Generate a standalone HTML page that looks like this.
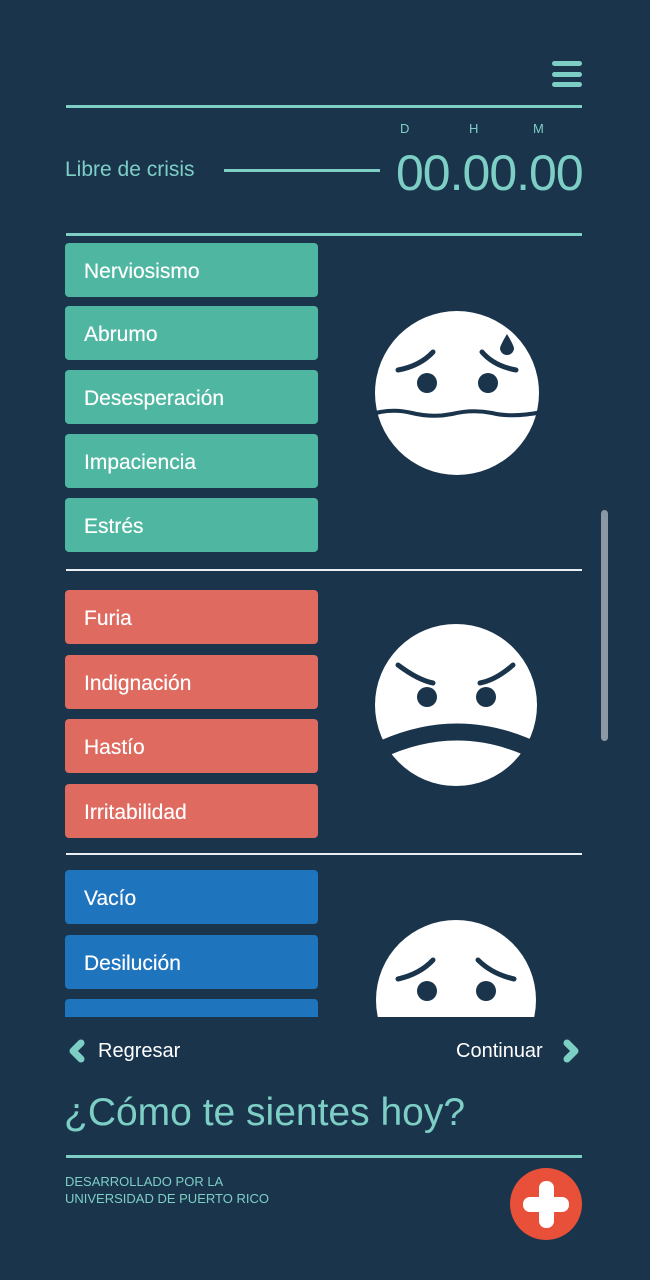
<!DOCTYPE html>
<html><head><meta charset="utf-8"><style>
*{margin:0;padding:0;box-sizing:border-box}
body{width:650px;height:1280px;background:#1a344c;position:relative;overflow:hidden;font-family:"Liberation Sans",sans-serif}
.a{position:absolute}
.hl{position:absolute;height:3px;background:#7dcfc6}
.btn{position:absolute;left:65px;width:253px;height:54px;border-radius:4px;color:#fff;font-size:21px;line-height:58px;padding-left:19px;text-shadow:0 0 0.4px #fff}
.g{background:#4fb7a1}.r{background:#df6a60}.b{background:#1f74be}
.t{color:#7dcfc6}
</style></head><body>
<div class="a" style="left:552px;top:61px;width:30px;height:5px;border-radius:3px;background:#7dcfc6"></div>
<div class="a" style="left:552px;top:72px;width:30px;height:5px;border-radius:3px;background:#7dcfc6"></div>
<div class="a" style="left:552px;top:82px;width:30px;height:5px;border-radius:3px;background:#7dcfc6"></div>
<div class="hl" style="left:66px;top:105px;width:516px"></div>
<div class="a t" style="left:400px;top:121px;font-size:13px">D</div>
<div class="a t" style="left:469px;top:121px;font-size:13px">H</div>
<div class="a t" style="left:533px;top:121px;font-size:13px">M</div>
<div class="a t" style="left:65px;top:158px;font-size:21px">Libre de crisis</div>
<div class="hl" style="left:224px;top:169px;width:156px"></div>
<div class="a t" style="left:396px;top:144px;font-size:50px;letter-spacing:-1px">00.00.00</div>
<div class="hl" style="left:66px;top:233px;width:516px"></div>

<div style="position:absolute;left:0;top:236px;width:650px;height:781px;overflow:hidden">
<div style="position:absolute;left:0;top:-236px;width:650px;height:1280px">
<div class="btn g" style="top:243px">Nerviosismo</div>
<div class="btn g" style="top:306px">Abrumo</div>
<div class="btn g" style="top:370px">Desesperación</div>
<div class="btn g" style="top:434px">Impaciencia</div>
<div class="btn g" style="top:498px">Estrés</div>
<div class="a" style="left:66px;top:569px;width:516px;height:2px;background:#e8eef2"></div>
<div class="btn r" style="top:590px">Furia</div>
<div class="btn r" style="top:655px">Indignación</div>
<div class="btn r" style="top:719px">Hastío</div>
<div class="btn r" style="top:784px">Irritabilidad</div>
<div class="a" style="left:66px;top:853px;width:516px;height:2px;background:#e8eef2"></div>
<div class="btn b" style="top:870px">Vacío</div>
<div class="btn b" style="top:935px">Desilución</div>
<div class="btn b" style="top:999px">x</div>
<svg class="a" style="left:0;top:0" width="650" height="1280">
<g fill="#fff"><circle cx="457" cy="393" r="82"/><circle cx="456" cy="705" r="81"/><circle cx="456" cy="1000" r="80"/></g>
<g fill="none" stroke="#1a344c" stroke-width="5" stroke-linecap="round">
<path d="M398 370 Q420 366 433 352"/><path d="M482 352 Q494 366 516 370"/>
<path d="M372 414 Q392 408 412 413 Q432 418 452 414 Q472 409 492 413 Q512 418 542 412" stroke-width="4"/>
<path d="M398 665 Q418 680 433 683"/><path d="M480 683 Q496 680 513 665"/>
<path d="M398 979 Q420 974 433 960"/><path d="M478 960 Q492 974 514 979"/>
</g>
<path d="M372 754 Q457 710 542 754" fill="none" stroke="#1a344c" stroke-width="17"/>
<g fill="#1a344c"><circle cx="427" cy="383" r="10"/><circle cx="488" cy="383" r="10"/>
<circle cx="427" cy="697" r="10"/><circle cx="486" cy="697" r="10"/>
<circle cx="427" cy="991" r="10"/><circle cx="486" cy="991" r="10"/>
<path d="M507 334 Q501 344 500 348 A7 7 0 0 0 514 348 Q513 344 507 334Z"/></g>
</svg>
</div></div>
<div class="a" style="left:601px;top:510px;width:7px;height:231px;border-radius:4px;background:#8c98a4"></div>

<svg class="a" style="left:66px;top:1038px" width="22" height="26"><path d="M15 5 L7 13 L15 21" fill="none" stroke="#7dcfc6" stroke-width="7" stroke-linecap="round" stroke-linejoin="round"/></svg>
<div class="a" style="left:98px;top:1040px;font-size:20px;color:#fff">Regresar</div>
<div class="a" style="left:456px;top:1040px;font-size:20px;color:#fff">Continuar</div>
<svg class="a" style="left:560px;top:1038px" width="22" height="26"><path d="M7 5 L15 13 L7 21" fill="none" stroke="#7dcfc6" stroke-width="7" stroke-linecap="round" stroke-linejoin="round"/></svg>
<div class="a t" style="left:64px;top:1091px;font-size:39px">¿Cómo te sientes hoy?</div>
<div class="hl" style="left:66px;top:1155px;width:516px"></div>
<div class="a t" style="left:65px;top:1173px;font-size:13px;line-height:17px">DESARROLLADO POR LA<br>UNIVERSIDAD DE PUERTO RICO</div>
<div class="a" style="left:510px;top:1168px;width:72px;height:72px;border-radius:50%;background:#e8503a"></div>
<div class="a" style="left:523px;top:1197px;width:46px;height:15px;border-radius:7px;background:#fff"></div>
<div class="a" style="left:539px;top:1181px;width:15px;height:47px;border-radius:7px;background:#fff"></div>
</body></html>
